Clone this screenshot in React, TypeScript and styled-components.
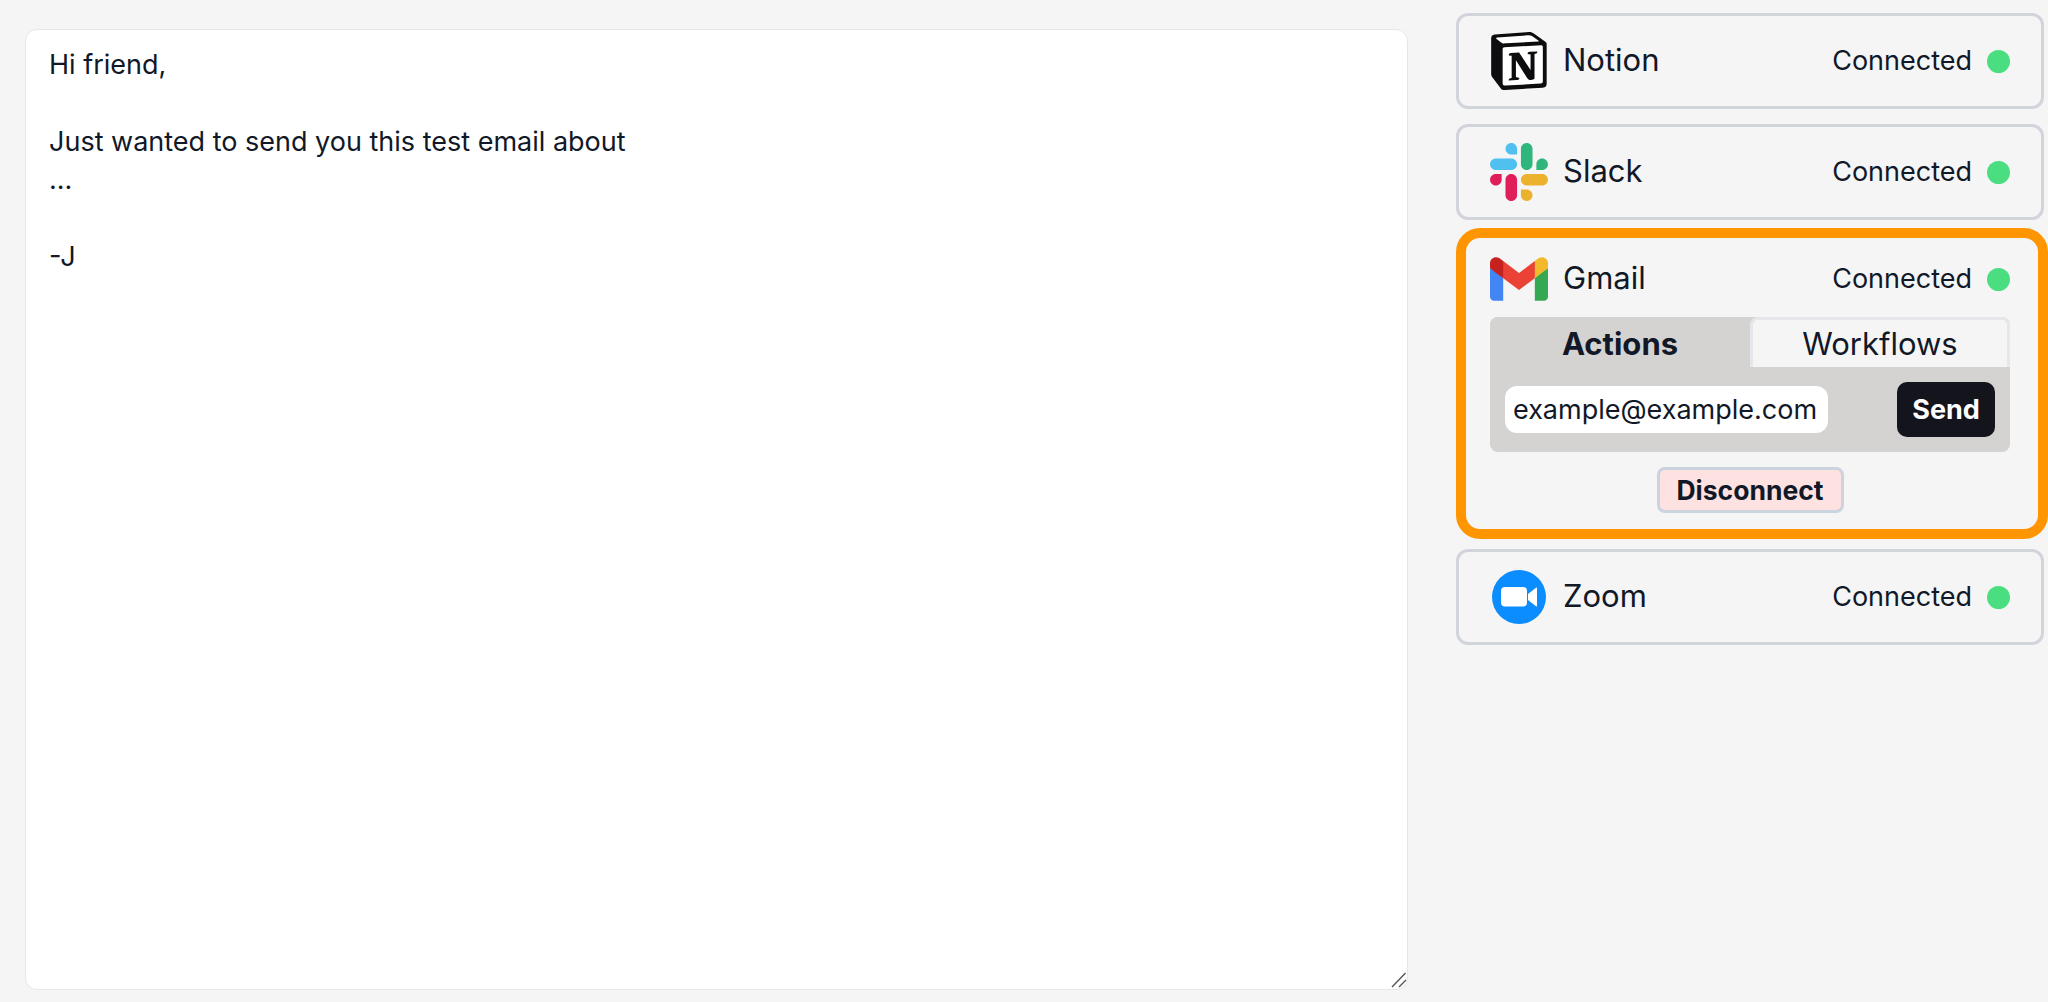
import React from "react";
import styled, { createGlobalStyle } from "styled-components";

const Global = createGlobalStyle`
  html, body { margin: 0; padding: 0; height: 100%; background: #f5f5f5; overflow: hidden; }
  body { font-family: Inter, "Liberation Sans", sans-serif; color: #111827; }
  * { box-sizing: border-box; }
`;

const Page = styled.div`
  width: 2048px;
  height: 1002px;
  display: flex;
  align-items: flex-start;
  gap: 48px;
  padding: 13px 4px 0 25px;
`;

const EditorWrap = styled.div`
  position: relative;
  width: 1383px;
  height: 961px;
  margin-top: 16px;
  flex: none;
`;

const Editor = styled.textarea`
  width: 100%;
  height: 100%;
  display: block;
  resize: none;
  background: #fff;
  border: 1.5px solid #e5e7eb;
  border-radius: 12px;
  padding: 16px 23px;
  font: 400 27px/38.4px Inter, sans-serif;
  color: #111827;
  outline: none;
`;

const Grip = styled.svg`
  position: absolute;
  right: 1px;
  bottom: 2px;
  width: 16px;
  height: 16px;
`;

const Sidebar = styled.div`
  width: 588px;
  flex: none;
  display: flex;
  flex-direction: column;
`;

const Card = styled.section<{ $active?: boolean; $gap: number }>`
  margin-top: ${(p) => p.$gap}px;
  border-radius: 12px;
  background: #f5f5f5;
  border: 3px solid #d1d5db;
  padding: 16px 31px;
  ${(p) =>
    p.$active &&
    `
    border: 10px solid #ff9500;
    border-radius: 24px;
    width: 592px;
    padding: 12px 28px 16px 24px;
  `}
`;

const Row = styled.div`
  display: flex;
  align-items: center;
  height: 58px;
`;

const Logo = styled.svg`
  width: 58px;
  height: 58px;
  flex: none;
  display: block;
`;

const Name = styled.div`
  margin-left: 15px;
  font-size: 31px;
  line-height: 56px;
  margin-bottom: 2px;
  flex: 1;
`;

const Status = styled.div`
  font-size: 27px;
  line-height: 56px;
  margin-bottom: 1px;
`;

const Dot = styled.div`
  width: 23px;
  height: 23px;
  margin-left: 15px;
  border-radius: 50%;
  background: #4ade80;
`;

const Panel = styled.div`
  margin-top: 9px;
  background: #d4d3d2;
  border-radius: 8px;
`;

const Tabs = styled.div`
  display: grid;
  grid-template-columns: 260px 260px;
  height: 50px;
`;

const Tab = styled.div<{ $on?: boolean }>`
  display: flex;
  align-items: center;
  justify-content: center;
  font-size: 31px;
  font-weight: ${(p) => (p.$on ? 700 : 400)};
  border-radius: 8px 8px 0 0;
  background: ${(p) => (p.$on ? "#d4d3d2" : "#f5f5f5")};
  border: 3px solid ${(p) => (p.$on ? "transparent" : "#e5e7eb")};
  border-bottom: none;
`;

const Form = styled.div`
  display: flex;
  align-items: center;
  justify-content: space-between;
  padding: 15px 15px;
`;

const Field = styled.input`
  width: 323px;
  height: 47px;
  border: none;
  border-radius: 12px;
  background: #fff;
  padding: 0 8px;
  font: 400 27px Inter, sans-serif;
  color: #111827;
  outline: none;
`;

const Send = styled.button`
  width: 98px;
  height: 55px;
  padding: 0;
  border: none;
  border-radius: 10px;
  background: #13141c;
  color: #fff;
  font: 700 27px Inter, sans-serif;
`;

const Footer = styled.div`
  display: flex;
  justify-content: center;
  margin-top: 15px;
`;

const Disconnect = styled.button`
  width: 187px;
  height: 46px;
  padding: 0;
  border: 3px solid #cbd3de;
  border-radius: 8px;
  background: #fee2e2;
  color: #111827;
  font: 700 26.5px Inter, sans-serif;
`;

const NotionLogo = () => (
  <Logo viewBox="-2 0 100 100">
    <path fill="#fff" d="M6.017 4.313l55.333 -4.087c6.797 -0.583 8.543 -0.19 12.817 2.917l17.663 12.443c2.913 2.14 3.883 2.723 3.883 5.053v68.243c0 4.277 -1.553 6.807 -6.99 7.193L24.467 99.967c-4.08 0.193 -6.023 -0.39 -8.16 -3.113L3.3 79.94c-2.333 -3.113 -3.3 -5.443 -3.3 -8.167V11.113c0 -3.497 1.553 -6.413 6.017 -6.8z" />
    <path fill="#0d0d10" fillRule="evenodd" clipRule="evenodd" d="M61.35 0.227l-55.333 4.087C1.553 4.7 0 7.617 0 11.113v60.66c0 2.723 0.967 5.053 3.3 8.167l13.007 16.913c2.137 2.723 4.08 3.307 8.16 3.113l64.257 -3.89c5.433 -0.387 6.99 -2.917 6.99 -7.193V20.64c0 -2.21 -0.873 -2.847 -3.443 -4.733L74.167 3.143c-4.273 -3.107 -6.02 -3.5 -12.817 -2.917zM25.92 19.523c-5.247 0.353 -6.437 0.433 -9.417 -1.99L8.927 11.507c-0.77 -0.78 -0.383 -1.753 1.557 -1.947l53.193 -3.887c4.467 -0.39 6.793 1.167 8.54 2.527l9.123 6.61c0.39 0.197 1.36 1.36 0.193 1.36l-54.933 3.307 -0.68 0.047zM19.803 88.3V30.367c0 -2.53 0.777 -3.697 3.103 -3.893L86 22.78c2.14 -0.193 3.107 1.167 3.107 3.693v57.547c0 2.53 -0.39 4.67 -3.883 4.863l-60.377 3.5c-3.493 0.193 -5.043 -0.97 -5.043 -4.083zm59.6 -54.827c0.387 1.75 0 3.5 -1.75 3.7l-2.91 0.577v42.773c-2.527 1.36 -4.853 2.137 -6.797 2.137 -3.107 0 -3.883 -0.973 -6.21 -3.887l-19.03 -29.94v28.967l6.02 1.363s0 3.5 -4.857 3.5l-13.39 0.777c-0.39 -0.78 0 -2.723 1.357 -3.11l3.497 -0.97v-38.3L30.48 40.667c-0.39 -1.75 0.58 -4.277 3.3 -4.473l14.367 -0.967 19.8 30.327v-26.83l-5.047 -0.58c-0.39 -2.143 1.163 -3.7 3.103 -3.89l13.4 -0.78z" />
  </Logo>
);

const SlackLogo = () => (
  <Logo viewBox="0 0 2447.6 2452.5">
    <path fill="#4fc0f0" d="m897.4 0c-135.3.1-244.8 109.9-244.7 245.2-.1 135.3 109.5 245.1 244.8 245.2h244.8v-245.1c.1-135.3-109.5-245.1-244.9-245.3.1 0 .1 0 0 0m0 654h-652.6c-135.3.1-244.9 109.9-244.8 245.2-.2 135.3 109.4 245.1 244.7 245.3h652.7c135.3-.1 244.9-109.9 244.8-245.2.1-135.4-109.5-245.2-244.8-245.3z" />
    <path fill="#2eb67d" d="m2447.6 899.2c.1-135.3-109.5-245.1-244.8-245.2-135.3.1-244.9 109.9-244.8 245.2v245.3h244.8c135.3-.1 244.9-109.9 244.8-245.3zm-652.7 0v-654c.1-135.2-109.4-245-244.7-245.2-135.3.1-244.9 109.9-244.8 245.2v654c-.2 135.3 109.4 245.1 244.7 245.3 135.3-.1 244.9-109.9 244.8-245.3z" />
    <path fill="#ecb22e" d="m1550.1 2452.5c135.3-.1 244.9-109.9 244.8-245.2.1-135.3-109.5-245.1-244.8-245.2h-244.8v245.2c-.1 135.2 109.5 245 244.8 245.2zm0-654.1h652.7c135.3-.1 244.9-109.9 244.8-245.2.2-135.3-109.4-245.1-244.7-245.3h-652.7c-135.3.1-244.9 109.9-244.8 245.2-.1 135.4 109.4 245.2 244.7 245.3z" />
    <path fill="#e01e5a" d="m0 1553.2c-.1 135.3 109.5 245.1 244.8 245.2 135.3-.1 244.9-109.9 244.8-245.2v-245.2h-244.8c-135.3.1-244.9 109.9-244.8 245.2zm652.7 0v654c-.2 135.3 109.4 245.1 244.7 245.3 135.3-.1 244.9-109.9 244.8-245.2v-653.9c.2-135.3-109.4-245.1-244.7-245.3-135.4 0-244.9 109.8-244.8 245.1 0 0 0 .1 0 0z" />
  </Logo>
);

const GmailLogo = () => (
  <Logo viewBox="0 -31.5 256 256">
    <path fill="#4285f4" d="M58.182 192.05V93.14L27.507 65.077 0 49.504v125.091c0 9.658 7.825 17.455 17.455 17.455h40.727Z" />
    <path fill="#34a853" d="M197.818 192.05h40.727c9.659 0 17.455-7.826 17.455-17.455V49.505l-31.156 17.837-27.026 25.798v98.91Z" />
    <path fill="#ea4335" d="m58.182 93.14-4.174-38.647 4.174-36.989L128 69.868l69.818-52.364 4.669 34.992-4.669 40.644L128 145.504z" />
    <path fill="#f2b92c" d="M197.818 17.504V93.14L256 49.504V26.231c0-21.585-24.64-33.89-41.89-20.945l-16.292 12.218Z" />
    <path fill="#c5221f" d="m0 49.504 26.759 20.07L58.182 93.14V17.504L41.89 5.286C24.61-7.66 0 4.646 0 26.23v23.273Z" />
  </Logo>
);

const ZoomLogo = () => (
  <Logo viewBox="0 0 58 58">
    <circle cx="29" cy="29" r="27" fill="#0b8cff" />
    <rect x="11" y="19" width="26" height="19.5" rx="4" fill="#fff" />
    <path fill="#fff" d="M38 26L46 19.8c.6-.4 1-.2 1 .5V37.700c0 .7-.4.9-1 .5L38 32z" />
  </Logo>
);

const Header = ({ logo, name }: { logo: React.ReactNode; name: string }) => (
  <Row>
    {logo}
    <Name>{name}</Name>
    <Status>Connected</Status>
    <Dot />
  </Row>
);

export default function App() {
  return (
    <Page>
      <Global />
      <EditorWrap>
        <Editor
          readOnly
          defaultValue={"Hi friend,\n\nJust wanted to send you this test email about\n...\n\n-J"}
        />
        <Grip viewBox="0 0 16 16">
          <path d="M1 15L14.5 1M8 15L15 8" stroke="#555" strokeWidth="1.4" fill="none" />
        </Grip>
      </EditorWrap>
      <Sidebar>
        <Card $gap={0}>
          <Header logo={<NotionLogo />} name="Notion" />
        </Card>
        <Card $gap={15}>
          <Header logo={<SlackLogo />} name="Slack" />
        </Card>
        <Card $gap={8} $active>
          <Header logo={<GmailLogo />} name="Gmail" />
          <Panel>
            <Tabs>
              <Tab $on>Actions</Tab>
              <Tab>Workflows</Tab>
            </Tabs>
            <Form>
              <Field readOnly defaultValue="example@example.com" />
              <Send>Send</Send>
            </Form>
          </Panel>
          <Footer>
            <Disconnect>Disconnect</Disconnect>
          </Footer>
        </Card>
        <Card $gap={10}>
          <Header logo={<ZoomLogo />} name="Zoom" />
        </Card>
      </Sidebar>
    </Page>
  );
}
